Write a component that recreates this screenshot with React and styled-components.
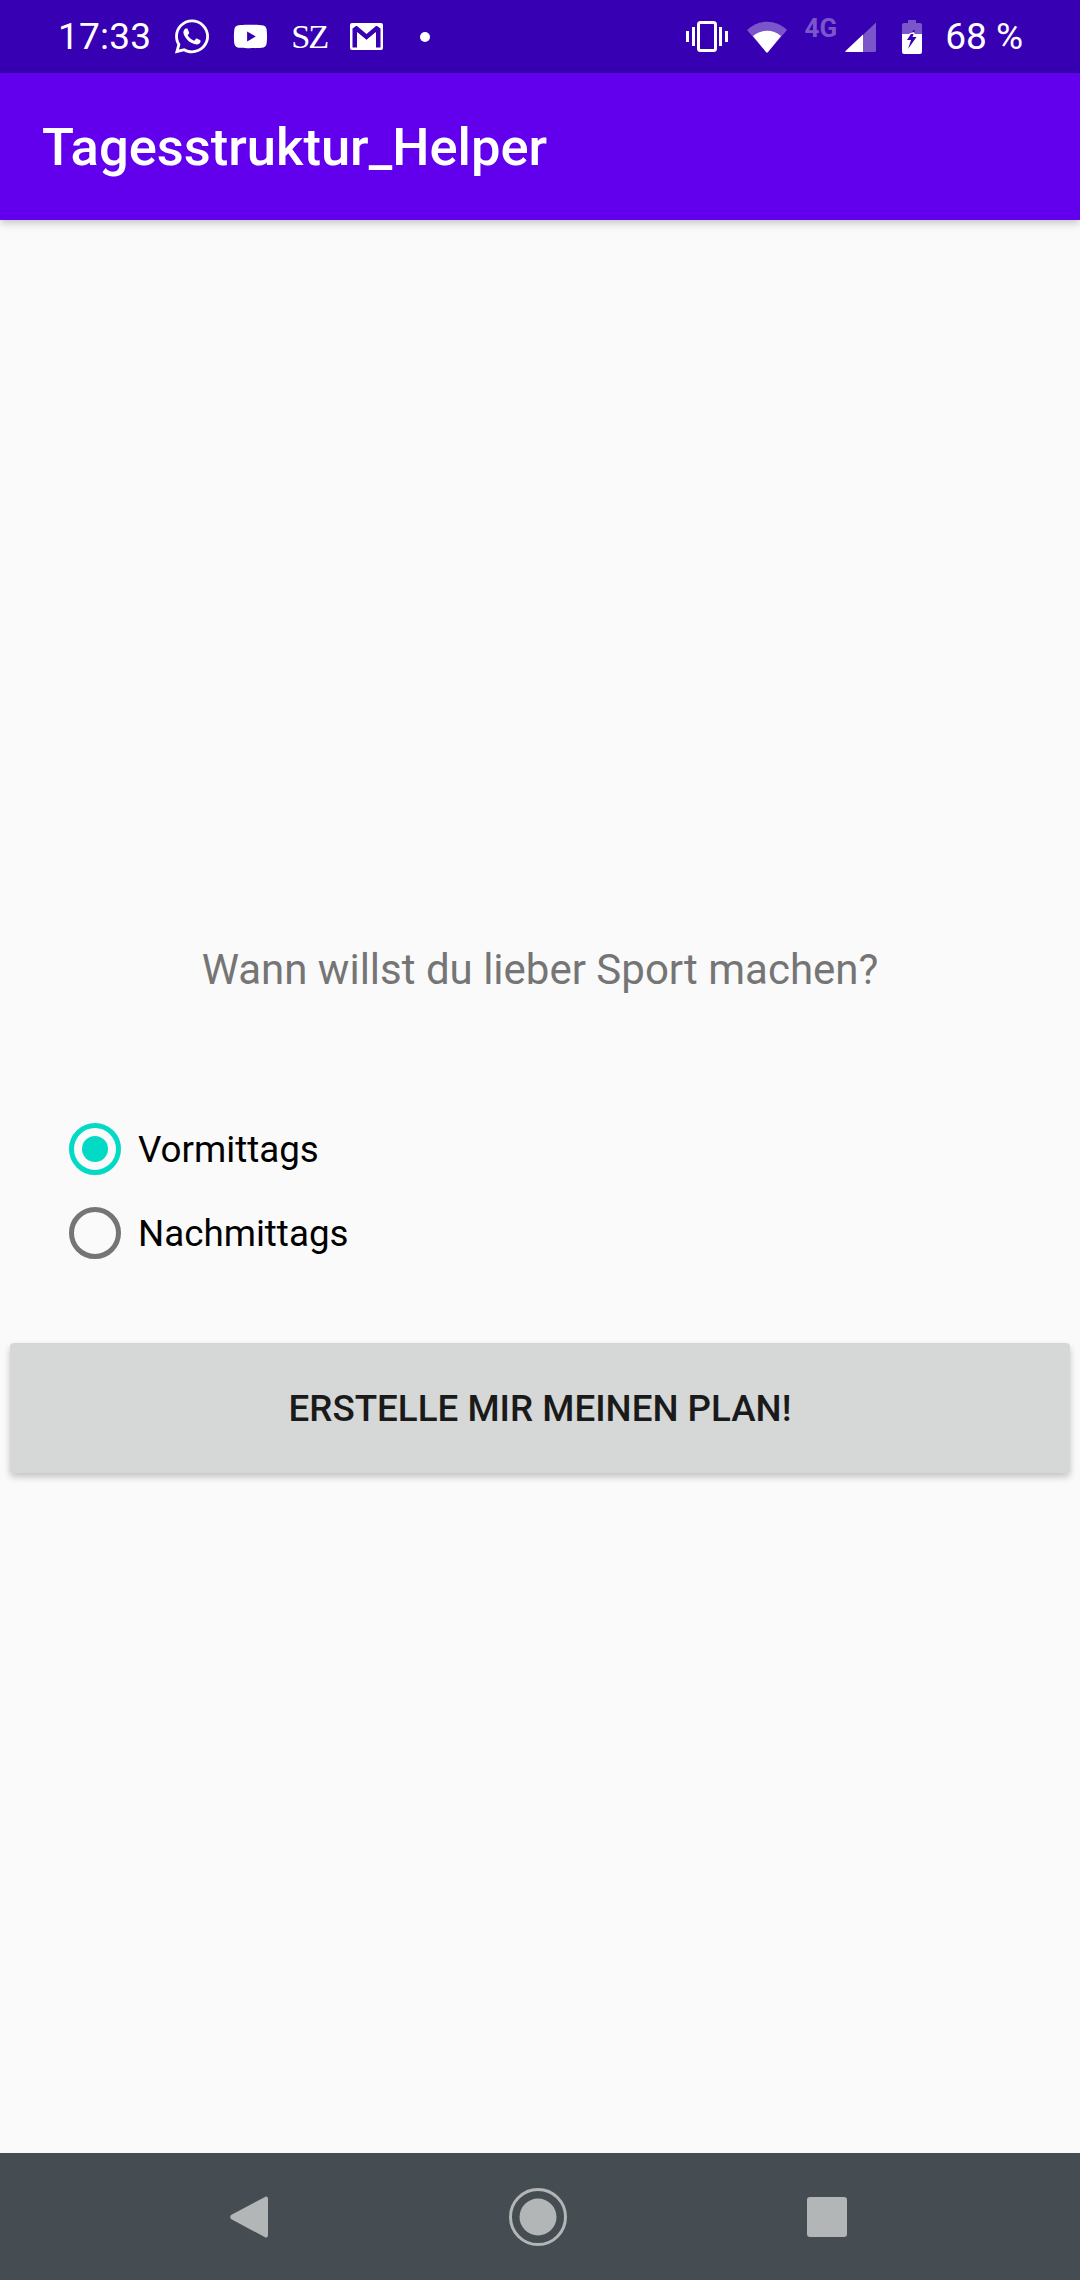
import React from "react";
import styled, { createGlobalStyle } from "styled-components";
import { FaWhatsapp, FaYoutube } from "react-icons/fa";

const Global = createGlobalStyle`
  html, body { margin: 0; padding: 0; background: #fafafa; }
  * { box-sizing: border-box; }
`;

const Screen = styled.div`
  width: 1080px;
  height: 2280px;
  display: flex;
  flex-direction: column;
  font-family: Roboto, "Liberation Sans", sans-serif;
  background: #fafafa;
  overflow: hidden;
`;

const StatusBar = styled.div`
  height: 73px;
  flex: none;
  background: #3700b3;
  color: #fff;
  display: flex;
  align-items: center;
  padding: 0 57px 0 58px;
`;

const Time = styled.span`
  font-size: 37px;
  line-height: 73px;
  width: 116px;
  letter-spacing: 0.2px;
`;

const NotifIcons = styled.div`
  display: flex;
  align-items: center;
  gap: 23px;
`;

const NotifSlot = styled.span`
  display: flex;
  align-items: center;
  justify-content: center;
  width: ${(p) => p.$w}px;
  height: 40px;
  color: #fff;
`;

const SzMark = styled.span`
  font-family: "Liberation Serif", serif;
  font-size: 33px;
  line-height: 40px;
  letter-spacing: -2px;
  transform: scaleX(1.04);
`;

const Dot = styled.span`
  width: 10px;
  height: 10px;
  border-radius: 50%;
  background: #fff;
  margin-left: 14px;
`;

const SystemIcons = styled.div`
  margin-left: auto;
  display: flex;
  align-items: center;
`;

const FourG = styled.span`
  font-size: 26px;
  font-weight: 700;
  line-height: 26px;
  color: #7b56cb;
  margin: -17px 8px 0 17px;
`;

const Percent = styled.span`
  font-size: 37px;
  line-height: 73px;
  margin-left: 23px;
  white-space: pre;
`;

const AppBar = styled.header`
  height: 147px;
  flex: none;
  background: #6200ee;
  color: #fff;
  display: flex;
  align-items: center;
  padding-left: 42px;
  font-size: 52.5px;
  font-weight: 500;
  box-shadow: 0 3px 8px rgba(0, 0, 0, 0.22);
  position: relative;
  z-index: 1;
`;

const Main = styled.main`
  flex: 1;
  display: flex;
  flex-direction: column;
  padding: 720px 10px 0;
`;

const Question = styled.h1`
  margin: 0;
  text-align: center;
  font-size: 42px;
  font-weight: 400;
  line-height: 60px;
  color: #757575;
`;

const RadioGroup = styled.div`
  display: flex;
  flex-direction: column;
  gap: 32px;
  margin: 123px 0 0 59px;
`;

const RadioRow = styled.label`
  display: flex;
  align-items: center;
  gap: 17px;
  height: 52px;
  font-size: 36.75px;
  color: #000;
`;

const RadioMark = styled.span`
  width: 52px;
  height: 52px;
  flex: none;
  border-radius: 50%;
  border: 5px solid ${(p) => (p.$on ? "#03dac5" : "#757575")};
  display: flex;
  align-items: center;
  justify-content: center;
  &::after {
    content: "";
    width: 26px;
    height: 26px;
    border-radius: 50%;
    background: ${(p) => (p.$on ? "#03dac5" : "transparent")};
  }
`;

const PlanButton = styled.button`
  height: 130px;
  margin-top: 84px;
  border: 0;
  border-radius: 4px;
  background: #d6d7d7;
  color: #1a1a1a;
  font-family: inherit;
  font-size: 36.75px;
  font-weight: 500;
  box-shadow: 0 4px 7px rgba(0, 0, 0, 0.22);
`;

const NavBar = styled.nav`
  height: 127px;
  flex: none;
  background: #464d52;
  display: flex;
  align-items: center;
  padding: 0 233px 0 230px;
  justify-content: space-between;
`;

const Sys = styled.svg`
  display: block;
  flex: none;
  margin-left: ${(p) => p.$ml || 0}px;
`;

const Gmail = () => (
  <svg width="33" height="27" viewBox="0 0 33 27">
    <rect x="0" y="0" width="33" height="27" rx="2" fill="#fff" />
    <path d="M2.5 5.5 V24.5 H7 V9 L16.5 17 L26 9 V24.5 H30.5 V5.5 L27 3 H26 L16.5 11 L7 3 H6 Z" fill="#3700b3" />
    <path d="M7.5 9.5 L16.5 17 L25.5 9.5 V24.5 H7.5 Z" fill="#fff" />
  </svg>
);

export default function App() {
  return (
    <Screen>
      <Global />
      <StatusBar>
        <Time>17:33</Time>
        <NotifIcons>
          <NotifSlot $w={36}><FaWhatsapp size={39} /></NotifSlot>
          <NotifSlot $w={35}><FaYoutube size={39} /></NotifSlot>
          <NotifSlot $w={36}><SzMark>SZ</SzMark></NotifSlot>
          <NotifSlot $w={33}><Gmail /></NotifSlot>
          <Dot />
        </NotifIcons>
        <SystemIcons>
          <Sys width="42" height="31" viewBox="0 0 42 31">
            <rect x="12.5" y="1.5" width="17" height="28" rx="2" fill="none" stroke="#fff" strokeWidth="3" />
            <path d="M0 10h3v11H0zM6 6h3v19H6zM33 6h3v19h-3zM39 10h3v11h-3z" fill="#fff" />
          </Sys>
          <Sys $ml={19} width="40" height="32" viewBox="0 0 40 32">
            <path d="M0 9 C11 -2 29 -2 40 9 L21 31 Q20 32 19 31 Z" fill="#7b56cb" />
            <path d="M6 15 C14 8 26 8 34 15 L21 31 Q20 32 19 31 Z" fill="#fff" />
          </Sys>
          <FourG>4G</FourG>
          <Sys width="31" height="31" viewBox="0 0 31 31">
            <path d="M31 1.5 V29.5 Q31 31 29.5 31 H0 Z" fill="#7b56cb" />
            <path d="M18 13.5 V31 H1 Q0 31 0.5 30 Z" fill="#fff" />
          </Sys>
          <Sys $ml={26} width="20" height="34" viewBox="0 0 20 34">
            <path d="M6 0h8v3h4q2 0 2 2v9H0V5q0-2 2-2h4z" fill="#7b56cb" />
            <path d="M0 14h20v18q0 2-2 2H2q-2 0-2-2z" fill="#fff" />
            <path d="M11.5 10 L5 20 H9 L6 29 L14.5 17 H10.5 L13 10 Z" fill="#3700b3" />
            <path d="M11.5 12 L6.5 14 H13 Z" fill="#fff" />
          </Sys>
          <Percent>68 %</Percent>
        </SystemIcons>
      </StatusBar>
      <AppBar>Tagesstruktur_Helper</AppBar>
      <Main>
        <Question>Wann willst du lieber Sport machen?</Question>
        <RadioGroup>
          <RadioRow><RadioMark $on />Vormittags</RadioRow>
          <RadioRow><RadioMark />Nachmittags</RadioRow>
        </RadioGroup>
        <PlanButton>ERSTELLE MIR MEINEN PLAN!</PlanButton>
      </Main>
      <NavBar>
        <Sys width="38" height="42" viewBox="0 0 38 42">
          <path d="M36 0.5 Q38 0 38 3 V39 Q38 42 35.5 41.5 L1 23 Q-0.5 21 1 19 Z" fill="#b2b6b7" />
        </Sys>
        <Sys width="58" height="58" viewBox="0 0 58 58">
          <circle cx="29" cy="29" r="27.5" fill="none" stroke="#b2b6b7" strokeWidth="3" />
          <circle cx="29" cy="29" r="18.5" fill="#b2b6b7" />
        </Sys>
        <Sys width="40" height="40" viewBox="0 0 40 40">
          <rect width="40" height="40" rx="3" fill="#b2b6b7" />
        </Sys>
      </NavBar>
    </Screen>
  );
}
